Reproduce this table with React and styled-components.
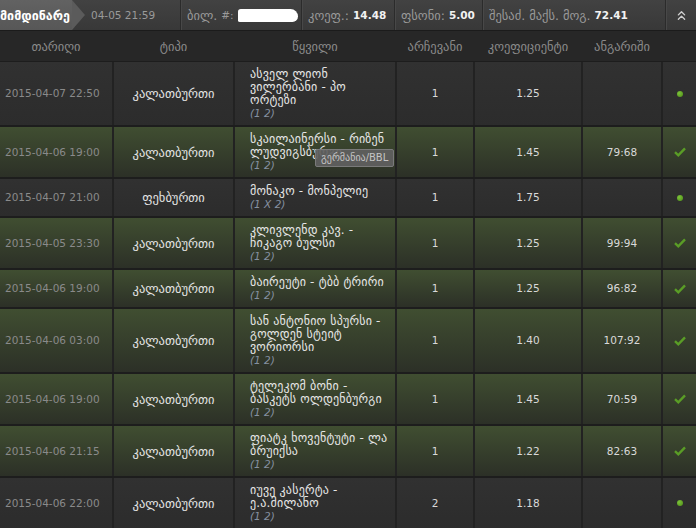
import styled, { createGlobalStyle } from "styled-components";
import { ChevronsUp } from "lucide-react";

const GlobalStyle = createGlobalStyle`
  html, body {
    margin: 0;
    padding: 0;
    background: #1d1d1d;
  }
  body {
    font-family: "DejaVu Sans", "Noto Sans", sans-serif;
    font-size: 12.5px;
  }
`;

const COLS = "112px 119px 160px 76px 106px 78px 1fr";

const Page = styled.div`
  width: 696px;
  height: 528px;
  overflow: hidden;
  background: #1d1d1d;
`;

const TopBar = styled.div`
  display: flex;
  height: 30px;
  background: linear-gradient(#424242, #383838);
  border-bottom: 1px solid #1b1b1b;
  color: #9a9a9a;
`;

const Tab = styled.div`
  position: relative;
  display: flex;
  align-items: center;
  width: 72px;
  background: linear-gradient(#626262, #575757);
  color: #fff;
  font-weight: bold;
  white-space: nowrap;
  &::after {
    content: "";
    position: absolute;
    right: -13px;
    top: 0;
    border-top: 15px solid transparent;
    border-bottom: 15px solid transparent;
    border-left: 13px solid #5b5b5b;
  }
`;

const BarItem = styled.div`
  display: flex;
  align-items: center;
  gap: 4px;
  padding-left: ${(p) => p.$pad || 6}px;
  width: ${(p) => p.$w}px;
  flex: ${(p) => (p.$grow ? 1 : "none")};
  border-left: ${(p) => (p.$first ? "none" : "1px solid #2b2b2b")};
  box-shadow: ${(p) => (p.$first ? "none" : "inset 1px 0 0 #484848")};
  white-space: nowrap;
  & b {
    color: #f2f2f2;
    font-size: 10.5px;
  }
`;

const Num = styled.span`
  font-size: 10.5px;
`;

const Redacted = styled.span`
  display: inline-block;
  width: 60px;
  height: 13px;
  background: #fff;
  border-radius: 3px 8px 6px 2px;
`;

const IconCell = styled.div`
  display: flex;
  align-items: center;
  justify-content: center;
  width: 30px;
  border-left: 1px solid #2b2b2b;
  box-shadow: inset 1px 0 0 #484848;
  color: #cfcfcf;
`;

const HeadRow = styled.div`
  display: grid;
  grid-template-columns: ${COLS};
  column-gap: 2px;
  height: 30px;
  background: #272727;
  color: #8b8b8b;
`;

const HeadCell = styled.div`
  display: flex;
  align-items: center;
  justify-content: center;
`;

const List = styled.div`
  display: flex;
  flex-direction: column;
  gap: 2px;
  padding-top: 1px;
`;

const Row = styled.div`
  display: grid;
  grid-template-columns: ${COLS};
  column-gap: 2px;
  background: #222;
`;

const Cell = styled.div`
  position: relative;
  display: flex;
  align-items: center;
  justify-content: ${(p) => p.$align || "center"};
  padding: 6px ${(p) => (p.$align ? "6px" : "0")} 6px ${(p) => (p.$align ? "5px" : "0")};
  line-height: 13px;
  font-size: ${(p) => (p.$num ? "10.5px" : "12.5px")};
  color: ${(p) => p.$color || "#d9d9d9"};
  background: ${(p) =>
    p.$won
      ? "linear-gradient(#404e31, #2c3027)"
      : "linear-gradient(#313131, #2c2c2c)"};
`;

const Pair = styled.div`
  display: flex;
  flex-direction: column;
  padding-left: 10px;
  color: #e6e6e6;
  white-space: nowrap;
  font-size: 12px;
  letter-spacing: 0.2px;
`;

const Pick = styled.i`
  color: #8590a0;
  font-size: 10.5px;
  line-height: 12px;
  letter-spacing: 0;
`;

const Dot = styled.span`
  width: 6px;
  height: 6px;
  border-radius: 50%;
  background: radial-gradient(circle at 35% 35%, #7cc23a, #4d8d16);
`;

const Tooltip = styled.div`
  position: absolute;
  left: 80px;
  top: 22px;
  padding: 2px 5px;
  background: rgba(96, 96, 96, 0.92);
  border: 1px solid #7a7a7a;
  border-radius: 2px;
  color: #c4c4c4;
  font-size: 10px;
  line-height: 12px;
  white-space: nowrap;
`;

const Check = () => (
  <svg width="12" height="10" viewBox="0 0 12 10">
    <path d="M1 5.2 L4.3 8.3 L11 1.4" fill="none" stroke="#5a9d26" strokeWidth="2.4" />
  </svg>
);

const rows = [
  { date: "2015-04-07 22:50", type: "კალათბურთი", pair: ["ასველ ლიონ", "ვილერბანი - პო", "ორტეზი"], pick: "(1 2)", sel: "1", odd: "1.25", score: "", won: false },
  { date: "2015-04-06 19:00", type: "კალათბურთი", pair: ["სკაილაინერსი - რიზენ", "ლუდვიგსბურგი"], pick: "(1 2)", sel: "1", odd: "1.45", score: "79:68", won: true, tip: "გერმანია/BBL" },
  { date: "2015-04-07 21:00", type: "ფეხბურთი", pair: ["მონაკო - მონპელიე"], pick: "(1 X 2)", sel: "1", odd: "1.75", score: "", won: false },
  { date: "2015-04-05 23:30", type: "კალათბურთი", pair: ["კლივლენდ კავ. -", "ჩიკაგო ბულსი"], pick: "(1 2)", sel: "1", odd: "1.25", score: "99:94", won: true },
  { date: "2015-04-06 19:00", type: "კალათბურთი", pair: ["ბაირეუტი - ტბბ ტრირი"], pick: "(1 2)", sel: "1", odd: "1.25", score: "96:82", won: true },
  { date: "2015-04-06 03:00", type: "კალათბურთი", pair: ["სან ანტონიო სპურსი -", "გოლდენ სტეიტ", "ვორიორსი"], pick: "(1 2)", sel: "1", odd: "1.40", score: "107:92", won: true },
  { date: "2015-04-06 19:00", type: "კალათბურთი", pair: ["ტელეკომ ბონი -", "ბასკეტს ოლდენბურგი"], pick: "(1 2)", sel: "1", odd: "1.45", score: "70:59", won: true },
  { date: "2015-04-06 21:15", type: "კალათბურთი", pair: ["ფიატკ ხოვენტუტი - ლა", "ბრუიქსა"], pick: "(1 2)", sel: "1", odd: "1.22", score: "82:63", won: true },
  { date: "2015-04-06 22:00", type: "კალათბურთი", pair: ["იუვე კასერტა -", "ე.ა.მილანო"], pick: "(1 2)", sel: "2", odd: "1.18", score: "", won: false },
];

const heads = ["თარიღი", "ტიპი", "წყვილი", "არჩევანი", "კოეფიციენტი", "ანგარიში", ""];

export default function App() {
  return (
    <Page>
      <GlobalStyle />
      <TopBar>
        <Tab>
          <span>მიმდინარე</span>
        </Tab>
        <BarItem $first $w={89} $pad={19}>
          <Num>04-05 21:59</Num>
        </BarItem>
        <BarItem $w={114}>
          ბილ. <Num>#:</Num> <Redacted />
        </BarItem>
        <BarItem $w={86}>
          კოეფ.: <b>14.48</b>
        </BarItem>
        <BarItem $w={81}>
          ფსონი: <b>5.00</b>
        </BarItem>
        <BarItem $grow>
          შესაძ. მაქს. მოგ. <b>72.41</b>
        </BarItem>
        <IconCell>
          <ChevronsUp size={15} strokeWidth={2.2} />
        </IconCell>
      </TopBar>
      <HeadRow>
        {heads.map((h, i) => (
          <HeadCell key={i}>{h}</HeadCell>
        ))}
      </HeadRow>
      <List>
        {rows.map((r, i) => (
          <Row key={i}>
            <Cell $won={r.won} $num $align="flex-start" $color="#8a8a8a">{r.date}</Cell>
            <Cell $won={r.won} $color="#e4e4e4">{r.type}</Cell>
            <Cell $won={r.won} $align="flex-start">
              <Pair>
                {r.pair.map((p, j) => (
                  <span key={j}>{p}</span>
                ))}
                <Pick>{r.pick}</Pick>
              </Pair>
              {r.tip && <Tooltip>{r.tip}</Tooltip>}
            </Cell>
            <Cell $won={r.won} $num>{r.sel}</Cell>
            <Cell $won={r.won} $num>{r.odd}</Cell>
            <Cell $won={r.won} $num>{r.score}</Cell>
            <Cell $won={r.won}>{r.won ? <Check /> : <Dot />}</Cell>
          </Row>
        ))}
      </List>
    </Page>
  );
}
